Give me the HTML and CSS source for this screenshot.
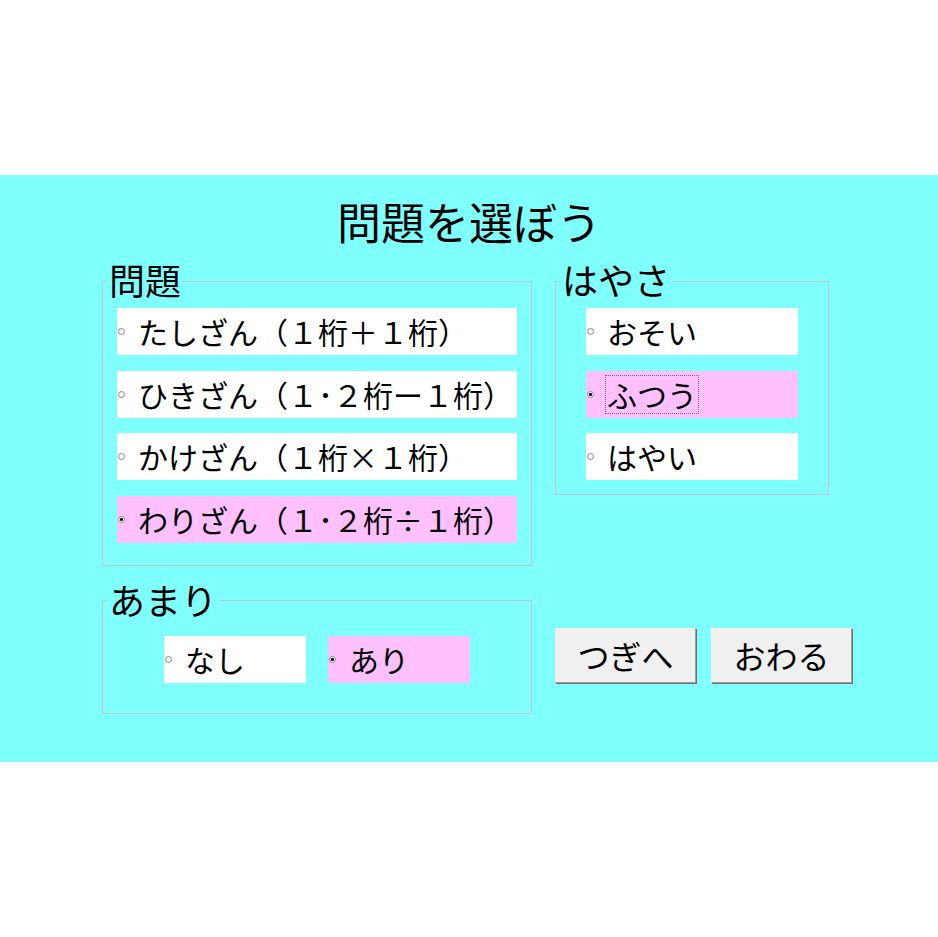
FILE: index.html
```html
<!DOCTYPE html>
<html lang="ja">
<head>
<meta charset="utf-8">
<title>問題を選ぼう</title>
<link rel="stylesheet" href="styles.css">
</head>
<body>
<div class="panel">
  <h1 class="title">問題を選ぼう</h1>
  <div class="layout">
    <fieldset class="group group-problem">
      <legend>問題</legend>
      <div class="options">
        <div class="option"><span class="radio"></span><span class="label">たしざん（１桁＋１桁）</span></div>
        <div class="option"><span class="radio"></span><span class="label">ひきざん（１･２桁ー１桁）</span></div>
        <div class="option"><span class="radio"></span><span class="label">かけざん（１桁×１桁）</span></div>
        <div class="option selected"><span class="radio checked"></span><span class="label">わりざん（１･２桁÷１桁）</span></div>
      </div>
    </fieldset>
    <fieldset class="group group-speed">
      <legend>はやさ</legend>
      <div class="options">
        <div class="option"><span class="radio"></span><span class="label">おそい</span></div>
        <div class="option selected"><span class="radio checked"></span><span class="label focused">ふつう</span></div>
        <div class="option"><span class="radio"></span><span class="label">はやい</span></div>
      </div>
    </fieldset>
    <fieldset class="group group-rest">
      <legend>あまり</legend>
      <div class="options options-row">
        <div class="option"><span class="radio"></span><span class="label">なし</span></div>
        <div class="option selected"><span class="radio checked"></span><span class="label">あり</span></div>
      </div>
    </fieldset>
    <div class="buttons">
      <button class="btn" type="button">つぎへ</button>
      <button class="btn" type="button">おわる</button>
    </div>
  </div>
</div>
</body>
</html>
```
FILE: styles.css
```css
html, body {
  margin: 0;
  padding: 0;
  background: #ffffff;
}
body {
  height: 937px;
  display: flex;
  flex-direction: column;
  justify-content: center;
  font-family: "Noto Sans CJK JP", "Noto Sans", sans-serif;
  color: #000;
}
.panel {
  height: 587px;
  box-sizing: border-box;
  background: #80ffff;
  padding: 24px 0 0 102px;
}
.title {
  margin: 0 0 18px -102px;
  font-size: 44px;
  font-weight: 400;
  line-height: 1;
  text-align: center;
}
.layout {
  display: grid;
  grid-template-columns: 430px 297px;
  column-gap: 23px;
  row-gap: 15px;
  align-items: start;
}
.group {
  margin: 0;
  padding: 0;
  min-width: 0;
  box-sizing: border-box;
  border: 1px solid #c4c4c4;
}
.group legend {
  font-size: 36px;
  font-weight: 400;
  line-height: 36px;
  padding: 0 2px 4px;
  margin-left: 4px;
}
.group-problem {
  width: 430px;
}
.group-problem .options {
  margin: 7px 14px 22px 14px;
}
.group-speed {
  width: 274px;
}
.group-speed .options {
  margin: 7px 30px 14px 30px;
}
.group-rest {
  width: 430px;
}
.group-rest .options {
  margin: 15px 0 30px 61px;
}
.options {
  display: flex;
  flex-direction: column;
  gap: 15.67px;
}
.options-row {
  flex-direction: row;
  gap: 22px;
}
.option {
  box-sizing: border-box;
  height: 47px;
  background: #ffffff;
  display: flex;
  align-items: center;
  padding-left: 1px;
  font-size: 30px;
  font-weight: 400;
}
.group-speed .option {
  width: 212px;
}
.group-rest .option {
  width: 142px;
}
.option.selected {
  background: #ffc0ff;
}
.radio {
  flex: none;
  width: 7px;
  height: 7px;
  box-sizing: border-box;
  border-radius: 50%;
  border: 1px solid #8c8c8c;
  background: #f4f4f4;
}
.radio.checked {
  background: radial-gradient(circle, #000 0 1.3px, #f4f4f4 1.6px);
}
.label {
  margin-left: 11px;
  padding: 0 1px;
  line-height: 37px;
  border: 1px dotted transparent;
  white-space: nowrap;
}
.label.focused {
  border-color: #6a6a7a;
}
.buttons {
  padding-top: 47px;
  display: flex;
  gap: 15px;
}
.btn {
  width: 141px;
  height: 55px;
  margin: 0;
  padding: 0;
  box-sizing: border-box;
  background: #f0f0f0;
  border: 1px solid;
  border-color: #f8f8f8 #a0a0a0 #a0a0a0 #f8f8f8;
  box-shadow: 1px 1px 0 #6e6e6e;
  font-family: "Noto Sans CJK JP", "Noto Sans", sans-serif;
  font-size: 32px;
  font-weight: 400;
  line-height: 1;
  color: #000;
}
```
